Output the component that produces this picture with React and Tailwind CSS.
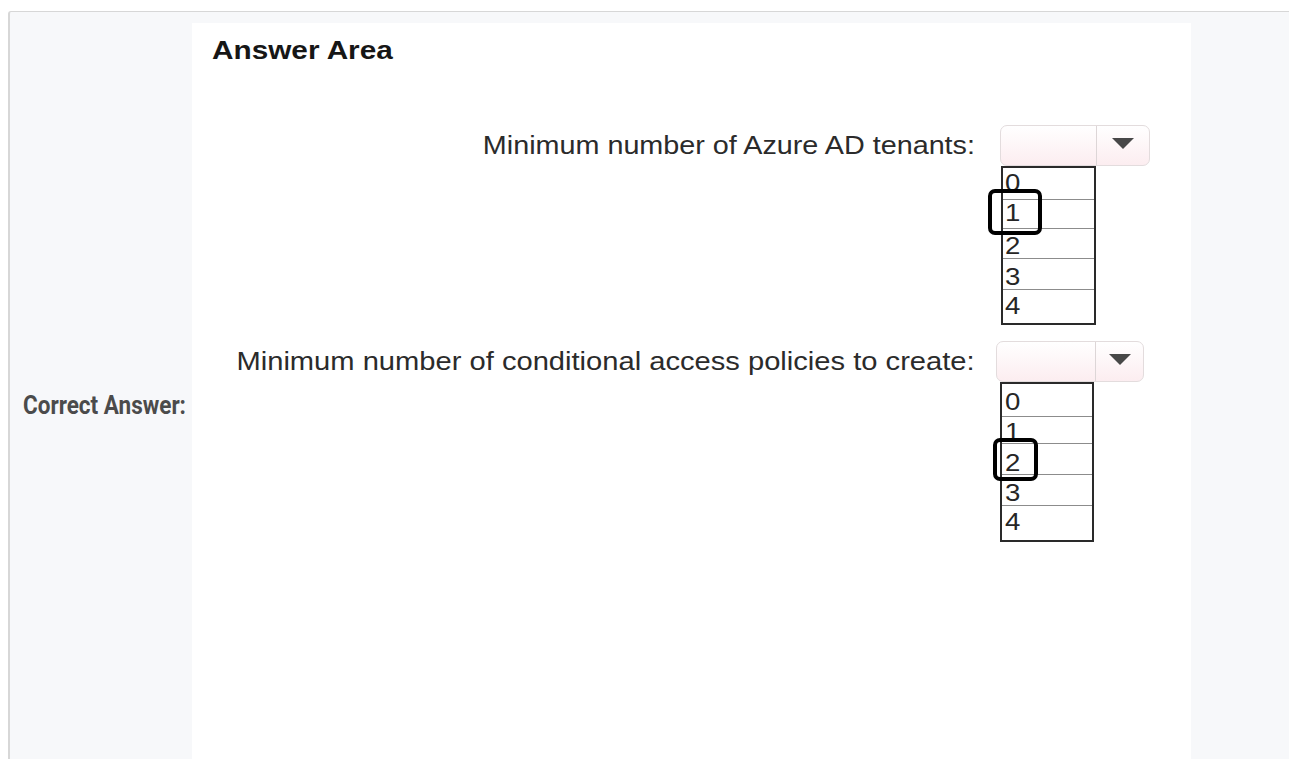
import React from "react";

const questions = [
  {
    label: "Minimum number of Azure AD tenants:",
    labelScale: "scale-x-[1.15]",
    colMl: "ml-[25px]",
    ddW: "w-[150px]",
    ddLeft: "w-[96px]",
    listMl: "ml-[1px]",
    listW: "w-[95px]",
    mt: "mt-[59px]",
    rows: [
      { d: "0", h: "h-[32px]", pt: "pt-[3px]", pl: "pl-[2px]" },
      { d: "1", h: "h-[29px]", pt: "pt-[1px]", pl: "pl-[2px]" },
      { d: "2", h: "h-[30px]", pt: "pt-[5px]", pl: "pl-[2px]" },
      { d: "3", h: "h-[31px]", pt: "pt-[6px]", pl: "pl-[2px]" },
      { d: "4", h: "h-[33px]", pt: "pt-[4px]", pl: "pl-[2px]" },
    ],
    hl: "left-[-15px] top-[21px] w-[54px] h-[46px]",
  },
  {
    label: "Minimum number of conditional access policies to create:",
    labelScale: "scale-x-[1.165]",
    colMl: "ml-[21px]",
    ddW: "w-[148px]",
    ddLeft: "w-[99px]",
    listMl: "ml-[4px]",
    listW: "w-[94px]",
    mt: "mt-[16px]",
    rows: [
      { d: "0", h: "h-[33px]", pt: "pt-[6px]", pl: "pl-[3px]" },
      { d: "1", h: "h-[27px]", pt: "pt-[3px]", pl: "pl-[3px]" },
      { d: "2", h: "h-[31px]", pt: "pt-[7px]", pl: "pl-[3px]" },
      { d: "3", h: "h-[31px]", pt: "pt-[6px]", pl: "pl-[3px]" },
      { d: "4", h: "h-[34px]", pt: "pt-[4px]", pl: "pl-[3px]" },
    ],
    hl: "left-[-9px] top-[54px] w-[45px] h-[43px]",
  },
];

function Dropdown({ w, left }) {
  return (
    <div
      className={`${w} h-[41px] flex rounded-[7px] border border-[#e3dcdd] bg-linear-to-b from-white to-[#fcedf0]`}
    >
      <div className={`${left} h-full border-r border-[#ddd6d7]`} />
      <div className="flex-1 flex items-center justify-center pb-[5px]">
        <svg width="22" height="11" viewBox="0 0 22 11">
          <polygon points="0,0 22,0 11,11" fill="#484848" />
        </svg>
      </div>
    </div>
  );
}

function Question({ q }) {
  return (
    <div className={`flex items-start ${q.mt}`}>
      <div className="w-[783px] shrink-0 h-[41px] flex items-center justify-end">
        <span
          className={`inline-block whitespace-nowrap origin-right ${q.labelScale} text-[25px] leading-none text-[#2b2b2b]`}
        >
          {q.label}
        </span>
      </div>
      <div className={`${q.colMl} flex flex-col`}>
        <Dropdown w={q.ddW} left={q.ddLeft} />
        <div
          className={`relative ${q.listMl} ${q.listW} border-2 border-[#2a2a2a] bg-white flex flex-col`}
        >
          {q.rows.map((r, i) => (
            <div
              key={r.d}
              className={`${r.h} ${r.pt} ${r.pl} ${
                i < q.rows.length - 1 ? "border-b border-[#8c8c8c]" : ""
              }`}
            >
              <span className="inline-block origin-left scale-x-[1.15] text-[24px] leading-none text-[#262626]">
                {r.d}
              </span>
            </div>
          ))}
          <div
            className={`absolute ${q.hl} border-[4px] border-black rounded-[7px]`}
          />
        </div>
      </div>
    </div>
  );
}

export default function App() {
  return (
    <div className="h-screen overflow-hidden bg-white pt-[11px] pl-[8px] font-['Liberation_Sans',Arial,sans-serif]">
      <div className="flex items-center border-t border-l-2 border-[#d7d7d7] rounded-tl-[3px] bg-[#f7f8fa]">
        <div className="w-[182px] shrink-0 pl-[13px]">
          <span className="inline-block whitespace-nowrap origin-left scale-x-[0.9] font-['Roboto',sans-serif] font-bold text-[25px] leading-none text-[#4b4b4b]">
            Correct Answer:
          </span>
        </div>
        <div className="py-[11px]">
          <div className="w-[999px] h-[768px] bg-white pt-[15px]">
            <div className="pl-[20px]">
              <span className="inline-block whitespace-nowrap origin-left scale-x-[1.19] font-bold text-[25px] leading-none text-[#161616]">
                Answer Area
              </span>
            </div>
            {questions.map((q) => (
              <Question key={q.label} q={q} />
            ))}
          </div>
        </div>
      </div>
    </div>
  );
}
